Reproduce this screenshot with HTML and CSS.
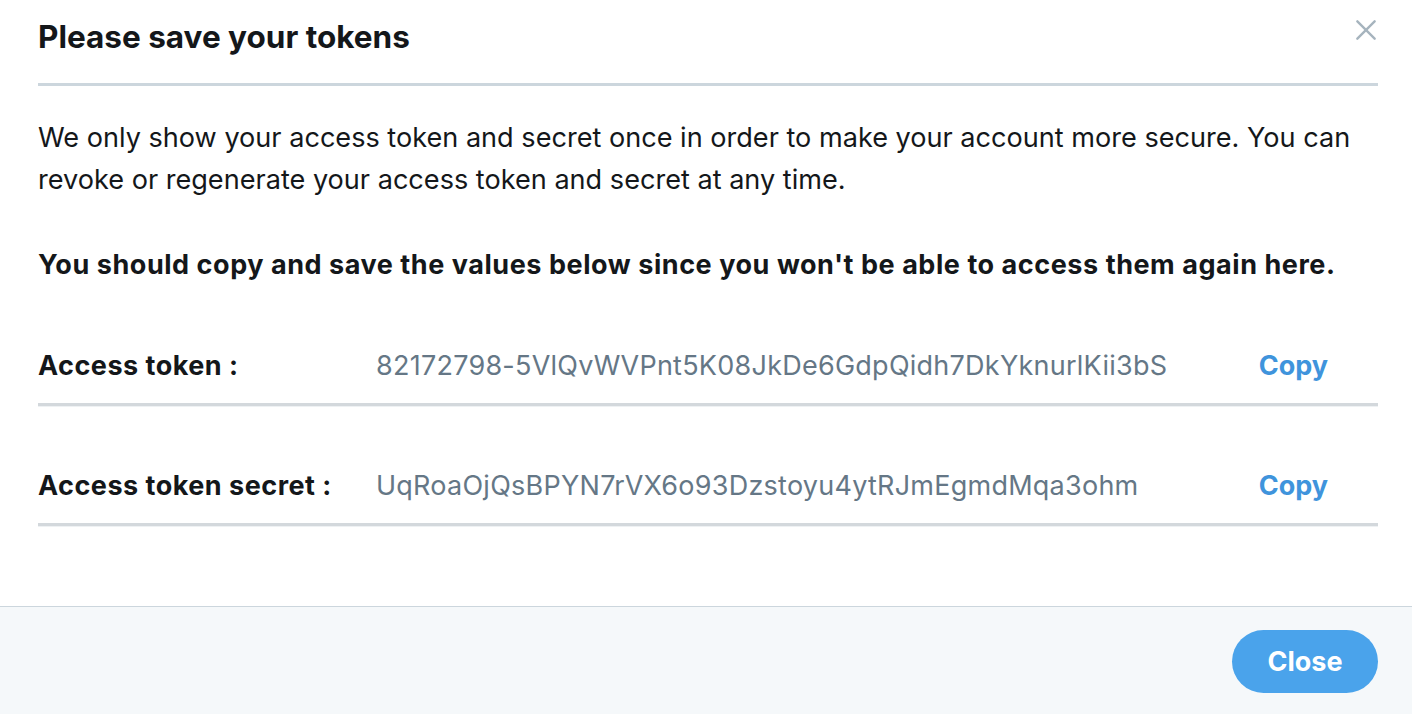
FILE: index.html
```html
<!DOCTYPE html>
<html lang="en">
<head>
<meta charset="utf-8">
<title>Please save your tokens</title>
<link rel="stylesheet" href="styles.css">
</head>
<body>
<div class="modal">
  <div class="modal-main">
    <header class="modal-header">
      <h1 class="modal-title">Please save your tokens</h1>
      <button class="close-x" aria-label="Close">
        <svg width="22" height="22" viewBox="0 0 22 22"><path d="M1.5 1.5 L20.5 20.5 M20.5 1.5 L1.5 20.5" stroke="#a6b4be" stroke-width="2.6" stroke-linecap="round" fill="none"/></svg>
      </button>
    </header>
    <p class="intro">We only show your access token and secret once in order to make your account more secure. You can revoke or regenerate your access token and secret at any time.</p>
    <p class="warning">You should copy and save the values below since you won't be able to access them again here.</p>
    <div class="token-row">
      <span class="token-label">Access token :</span>
      <span class="token-value">82172798-5VlQvWVPnt5K08JkDe6GdpQidh7DkYknurlKii3bS</span>
      <span class="copy">Copy</span>
    </div>
    <div class="token-row">
      <span class="token-label">Access token secret :</span>
      <span class="token-value">UqRoaOjQsBPYN7rVX6o93Dzstoyu4ytRJmEgmdMqa3ohm</span>
      <span class="copy">Copy</span>
    </div>
  </div>
  <footer class="modal-footer">
    <button class="close-btn">Close</button>
  </footer>
</div>
</body>
</html>
```

FILE: styles.css
```css
* { box-sizing: border-box; }
html, body {
  margin: 0;
  padding: 0;
  height: 100%;
  background: #ffffff;
}
body {
  font-family: "Inter", "Liberation Sans", sans-serif;
  color: #14171a;
}
.modal {
  min-height: 100%;
  display: flex;
  flex-direction: column;
}
.modal-main {
  padding: 0 34px 80px 38px;
}
.modal-header {
  display: flex;
  justify-content: space-between;
  align-items: flex-start;
  padding: 20px 0 29px;
  border-bottom: 3px solid #ccd6dd;
}
.modal-title {
  margin: 0;
  font-size: 31.5px;
  line-height: 34px;
  font-weight: 700;
}
.close-x {
  border: 0;
  background: none;
  padding: 0;
  margin: 0 1px 0 0;
  width: 22px;
  height: 20px;
  cursor: pointer;
}
.close-x svg { display: block; width: 22px; height: 20px; }
.intro {
  margin: 31px 0 0;
  font-size: 27.1px;
  line-height: 42px;
}
.warning {
  margin: 43px 0 0;
  font-size: 27px;
  line-height: 42px;
  font-weight: 700;
  letter-spacing: 0.55px;
}
.token-row {
  display: grid;
  grid-template-columns: 338px 1fr auto;
  align-items: center;
  padding: 59px 0 16px;
  border-bottom: 3px solid #d3d8dc;
  box-shadow: 0 1px 0 #eef1f3;
  font-size: 27px;
  line-height: 42px;
}
.token-label { font-weight: 700; letter-spacing: 0.5px; }
.token-value { color: #657786; letter-spacing: 0.25px; }
.copy {
  color: #3f94dc;
  font-weight: 700;
  margin-right: 50px;
  cursor: pointer;
}
.modal-footer {
  flex: 1;
  background: #f5f8fa;
  border-top: 1px solid #ccd6dd;
  padding: 23px 34px 20px;
  display: flex;
  justify-content: flex-end;
  align-items: flex-start;
}
.close-btn {
  width: 146px;
  height: 63px;
  border: 0;
  border-radius: 32px;
  background: #4aa3eb;
  color: #ffffff;
  font-family: inherit;
  font-size: 27px;
  font-weight: 700;
  cursor: pointer;
}
```
